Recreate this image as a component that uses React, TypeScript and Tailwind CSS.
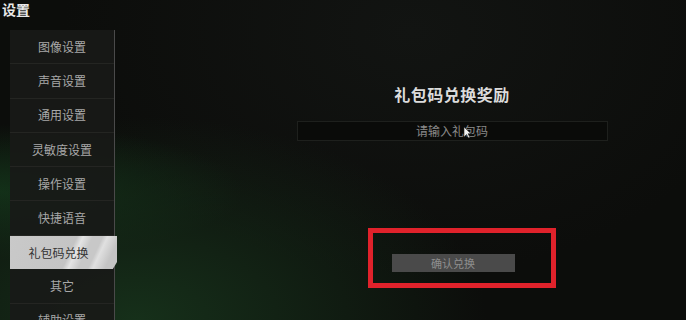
import React from "react"

const menu = ["图像设置", "声音设置", "通用设置", "灵敏度设置", "操作设置", "快捷语音", "礼包码兑换", "其它", "辅助设置"]

function Cursor() {
  return (
    <svg className="absolute left-[463px] top-[126px]" width="9" height="13" viewBox="0 0 9 13">
      <path d="M1 1 L1 11 L3.5 8.5 L5.5 12 L7 11.2 L5 7.8 L8 7.8 Z" fill="#f2f2f2" stroke="#222" strokeWidth="0.6" />
    </svg>
  )
}

export default function App() {
  return (
    <div
      className="relative w-[686px] h-[320px] overflow-hidden text-white bg-[#0c0d0b] bg-[radial-gradient(ellipse_at_20%_100%,#16301a_0%,rgba(12,13,11,0)_45%),radial-gradient(ellipse_at_0%_60%,#123018_0%,rgba(12,13,11,0)_25%),radial-gradient(ellipse_at_60%_10%,#121412_0%,rgba(12,13,11,0)_60%)]"
      style={{ fontFamily: '"Noto Sans CJK SC", "Noto Sans", sans-serif' }}
    >
      <div className="flex h-full">
        {/* left column */}
        <div className="flex flex-col w-[118px] shrink-0">
          <div className="h-[30px] shrink-0 pl-[2px] pt-[1px] text-[14px] font-bold leading-[16px] text-[#e8e8e8]">设置</div>
          <div className="flex flex-col shrink-0 ml-[10px] w-[105px] border-r border-[#4a4a4a] bg-[#181917]/90">
            {menu.map((m) =>
              m === "礼包码兑换" ? (
                <div
                  key={m}
                  className="relative shrink-0 flex items-center justify-center h-[33.5px] w-[107px] text-[12px] text-[#333] bg-[linear-gradient(115deg,#c9c9c9_0%,#c4c4c4_55%,#e4e4e4_60%,#c8c8c8_68%,#c8c8c8_76%,#e0e0e0_80%,#c4c4c4_90%)] [clip-path:polygon(0_0,100%_0,100%_78%,96%_100%,0_100%)] pr-[10px]"
                >
                  {m}
                </div>
              ) : (
                <div
                  key={m}
                  className="shrink-0 flex items-center justify-center h-[34.3px] text-[12px] text-[#a8a8a8] border-b border-[#242522]"
                >
                  {m}
                </div>
              )
            )}
          </div>
        </div>

        {/* main area */}
        <div className="flex-1 flex flex-col items-center pl-[100px]">
          <div className="mt-[83px] text-[16px] font-bold leading-[22px] text-[#dcdcdc] tracking-[0.5px]">礼包码兑换奖励</div>
          <div className="mt-[16px] w-[311px] h-[20px] flex items-center justify-center bg-[#0a0b09] border border-[#1e201d] text-[12px] text-[#8a8a8a]">
            请输入礼包码
          </div>
          <div className="mt-[87px] w-[188px] h-[60px] border-[5px] border-[#e0222b] flex items-center justify-center ml-[20px]">
            <div className="mt-[10px] mr-[18px] w-[123px] h-[18px] bg-[#4a4a4a] flex items-center justify-center text-[11px] text-[#8e8e8e]">
              确认兑换
            </div>
          </div>
        </div>
      </div>
      <Cursor />
    </div>
  )
}
